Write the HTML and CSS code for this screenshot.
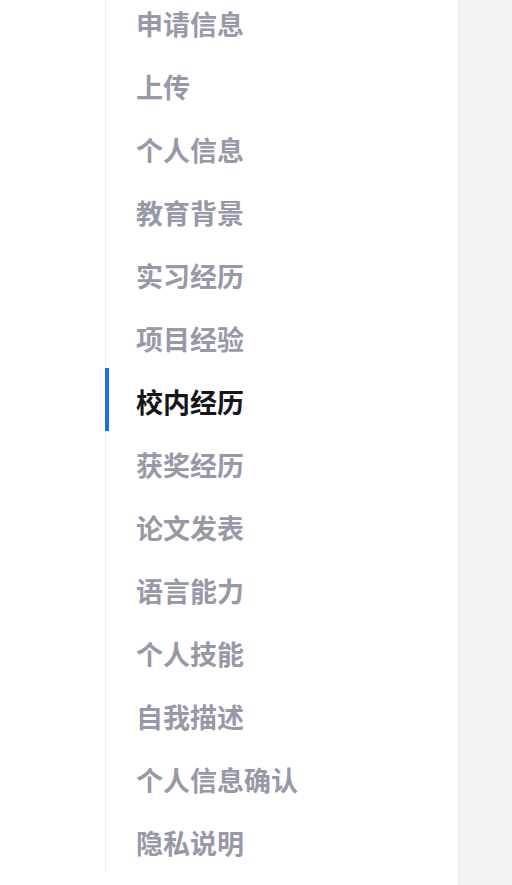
FILE: index.html
```html
<!DOCTYPE html>
<html lang="zh">
<head>
<meta charset="utf-8">
<link rel="stylesheet" href="styles.css">
</head>
<body>
<div class="page">
  <div class="gutter"></div>
  <nav class="nav">
    <ul class="nav-list">
      <li class="nav-item">申请信息</li>
      <li class="nav-item">上传</li>
      <li class="nav-item">个人信息</li>
      <li class="nav-item">教育背景</li>
      <li class="nav-item">实习经历</li>
      <li class="nav-item">项目经验</li>
      <li class="nav-item active">校内经历</li>
      <li class="nav-item">获奖经历</li>
      <li class="nav-item">论文发表</li>
      <li class="nav-item">语言能力</li>
      <li class="nav-item">个人技能</li>
      <li class="nav-item">自我描述</li>
      <li class="nav-item">个人信息确认</li>
      <li class="nav-item">隐私说明</li>
    </ul>
  </nav>
  <div class="aside"></div>
</div>
</body>
</html>
```
FILE: styles.css
```css
html, body {
  margin: 0;
  padding: 0;
  background: #ffffff;
}
.page {
  display: flex;
  width: 512px;
  height: 885px;
  overflow: hidden;
}
.gutter {
  width: 105px;
  flex: none;
}
.nav {
  width: 353px;
  flex: none;
  align-self: flex-start;
  margin-top: -10px;
  border-left: 1px solid #ededf0;
  box-sizing: border-box;
}
.nav-list {
  list-style: none;
  margin: 0;
  padding: 0;
}
.nav-item {
  position: relative;
  height: 63px;
  display: flex;
  align-items: center;
  padding-left: 30px;
  padding-top: 4px;
  box-sizing: border-box;
  font-family: "Noto Sans CJK SC", "Noto Sans", sans-serif;
  font-weight: 700;
  font-size: 27px;
  color: #9799a8;
  white-space: nowrap;
}
.nav-item.active {
  color: #16161a;
}
.nav-item.active::before {
  content: "";
  position: absolute;
  left: -1px;
  top: 0;
  width: 4px;
  height: 63px;
  background: #1a6fe2;
}
.aside {
  flex: 1;
  background: #f3f3f4;
  box-shadow: inset 3px 0 4px -2px rgba(0,0,0,0.04);
}
```
